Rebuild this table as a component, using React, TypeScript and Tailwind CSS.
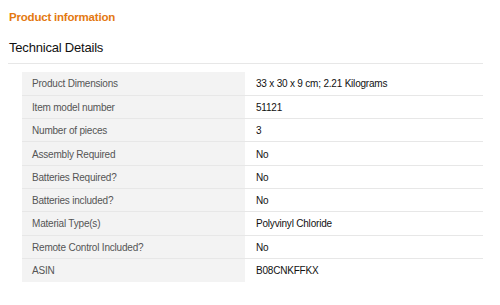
const details: [string, string][] = [
  ["Product Dimensions", "33 x 30 x 9 cm; 2.21 Kilograms"],
  ["Item model number", "51121"],
  ["Number of pieces", "3"],
  ["Assembly Required", "No"],
  ["Batteries Required?", "No"],
  ["Batteries included?", "No"],
  ["Material Type(s)", "Polyvinyl Chloride"],
  ["Remote Control Included?", "No"],
  ["ASIN", "B08CNKFFKX"],
];

export default function App() {
  return (
    <div className="h-[305px] w-[500px] bg-white font-['Liberation_Sans',Arial,sans-serif] text-[#333]">
      <h1 className="pl-[9px] pt-[9px] text-[11.5px] font-bold leading-[16px] tracking-[-0.2px] text-[#e47911]">
        Product information
      </h1>
      <h2 className="mt-[13px] pl-[9px] text-[13px] leading-[20px] tracking-[-0.2px] text-[#111]">
        Technical Details
      </h2>
      <div className="ml-[8px] mr-[17px] mt-[5px] border-t border-[#e7e7e7]" />
      <table className="ml-[22px] mt-[8px] w-[461px] border-collapse text-[10px] tracking-[-0.2px]">
        <tbody>
          {details.map(([label, value], i) => (
            <tr
              key={label}
              className={`h-[23.3px] ${i < details.length - 1 ? "border-b border-[#e7e7e7]" : ""}`}
            >
              <th className="w-[223px] bg-[#f3f3f3] pl-[10px] pt-[1px] text-left font-normal text-[#555]">
                {label}
              </th>
              <td className="pl-[11px] pt-[1px] text-[#111]">{value}</td>
            </tr>
          ))}
        </tbody>
      </table>
    </div>
  );
}
